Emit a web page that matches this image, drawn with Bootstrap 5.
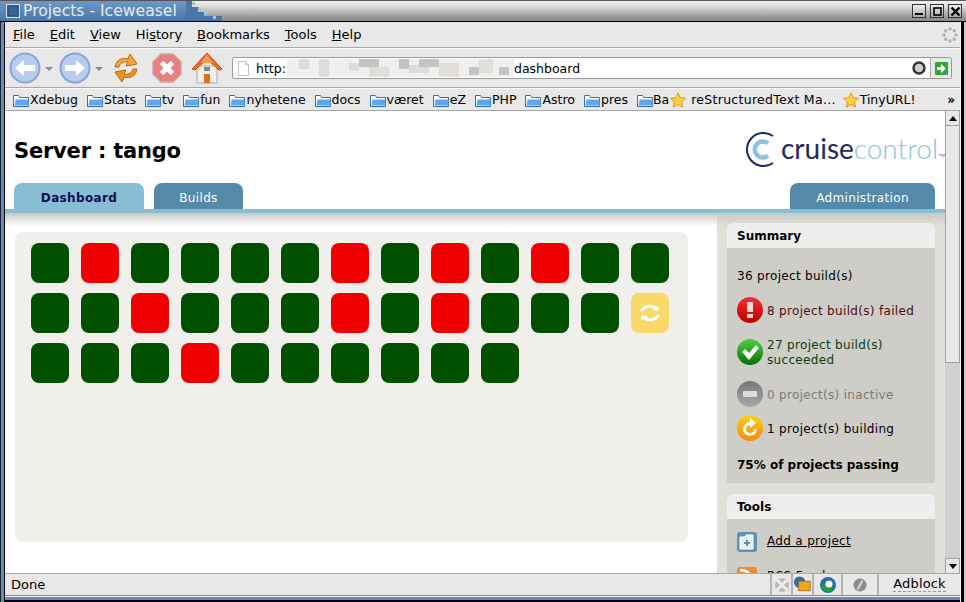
<!DOCTYPE html>
<html lang="en">
<head>
<meta charset="UTF-8">
<title>Projects - Iceweasel</title>
<link rel="stylesheet" href="https://cdn.jsdelivr.net/npm/bootstrap@5.3.0/dist/css/bootstrap.min.css">
<style>
html, body { height: 100%; }
body { width: 966px; height: 602px; overflow: hidden; background: #000; font-family: "DejaVu Sans", sans-serif; font-size: 13px; color: #000; }
.win { width: 966px; height: 602px; background: #000; }

/* window title */
.titlebar { height: 22px; flex: none; background: linear-gradient(#f2f2f2, #d8d8d8 30%, #8e8e8e 90%); border-top: 1px solid #555; border-bottom: 1px solid #000; }
.title-tab { width: 186px; background: linear-gradient(#6d97c6, #4a77a8); color: #e4ecf5; font-size: 15.6px; line-height: 20px; padding-left: 6px; gap: 3px; white-space: nowrap; }
.title-steps { width: 36px; }
.win-btn { width: 14px; height: 14px; border: 1px solid #333; background: linear-gradient(#eee, #aaa); margin-right: 4px; }

.frame-left { flex: none; width: 5px; border-left: 1px solid #222; border-right: 1px solid #000; background: #5f8fc4; }
.frame-right { flex: none; width: 6px; border-left: 1px solid #f4f4f4; border-right: 2px solid #ccc; background: #000; }
.frame-bottom { height: 6px; flex: none; background: #5f8fc4; border-top: 1px solid #f0f0f0; border-bottom: 2px solid #000; }

/* firefox chrome */
.menubar { height: 26px; flex: none; background: #e8e8e8; border-bottom: 1px solid #a8a8a8; padding-left: 8px; gap: 15px; }
.menubar span { line-height: 25px; }
.throbber { margin-left: auto; margin-right: 2px; }
.navtools { height: 40px; flex: none; background: #e8e8e8; border-top: 1px solid #fafafa; border-bottom: 1px solid #a8a8a8; padding-left: 4px; }
.drop-arrow { width: 0; height: 0; border-left: 4px solid transparent; border-right: 4px solid transparent; border-top: 4px solid #8a8a8a; margin: 2px 6px 0 4px; }
.nav-gap { margin-left: 10px; }
.urlbar { width: 720px; height: 22px; background: #fff; border: 1px solid #9a9a9a; border-radius: 2px; margin-left: 9px; line-height: 20px; font-size: 12.5px; }
.urlbar span { margin-top: 2px; }
.url-text { margin-left: 6px; width: 31px; }
.url-go { width: 21px; height: 100%; background: #e8e8e8; border-left: 1px solid #b0b0b0; }
.bookmarks { height: 23px; flex: none; background: #e8e8e8; border-top: 1px solid #fafafa; border-bottom: 1px solid #a8a8a8; padding: 1px 0 0 8px; white-space: nowrap; overflow: hidden; font-size: 12.5px; }
.bm { gap: 1px; margin-right: 9px; }
.bm-cut { margin-right: 1px; }
.bm-long { letter-spacing: .28px; margin-right: 7px; }
.bm-more { margin-left: auto; margin-right: 5px; font-size: 12px; font-weight: 700; }

/* page */
.content-row { height: 462px; flex: none; overflow: hidden; }
.page { width: 940px; background: #fff; overflow: hidden; }
.page-head { height: 72px; padding: 0 0 0 9px; }
.server-name { font-size: 21px; font-weight: 700; margin: 9px 0 0; letter-spacing: -.2px; line-height: 1; }
.logo { gap: 5px; margin-top: 2px; }
.logo svg { margin-top: 3px; }
.logo-text { font-family: Lato, sans-serif; font-size: 28px; line-height: 1; color: #1c2a66; font-weight: 400; }
.logo-text em { font-style: normal; color: #8cc2da; font-weight: 300; }
.logo-tm { font-size: 4px; color: #777; align-self: flex-end; margin: 0 0 8px -4px; }
.tabbar { height: 26px; padding: 0 10px 0 9px; gap: 10px; font-size: 12px; }
.tab-link { display: block; height: 26px; line-height: 31px; text-align: center; color: #fff; background: #5589a8; border-radius: 8px 8px 0 0; padding: 0; letter-spacing: .35px; }
.tab-link:hover { color: #fff; }
.tab-link.on { width: 130px; background: #88bed4; color: #0c0c55; font-weight: 700; }
.tab-builds { width: 89px; }
.tab-admin { width: 145px; }
.tab-rule { height: 4px; background: #88bed4; }
.page-main { height: 361px; }
.left-col { width: 712px; padding: 19px 0 0 10px; background: linear-gradient(#c8c8c4, #fafafa) 0 0 / 100% 12px no-repeat, #fff; }
.board { width: 673px; height: 310px; background: #f0efec; border-radius: 8px; padding: 11px 0 0 16px; display: grid; grid-template-columns: repeat(13, 38px); grid-auto-rows: 40px; column-gap: 12px; row-gap: 10px; }
.tile { border-radius: 8px; }
.tile-ok { background: #005000; }
.tile-bad { background: #f00000; }
.tile-run { background: #fad96c; }

.side-col { width: 228px; background: linear-gradient(#c8c8c4, #e0e0d8) 0 0 / 100% 12px no-repeat, #e0e0d8; padding: 10px 10px 0; }
.panel-box { background: #cfcdc8; border: 0; border-radius: 6px 6px 0 0; margin-bottom: 11px; }
.panel-box .card-header { background: #eeeeee; border: 0; border-radius: 6px 6px 0 0; height: 25px; line-height: 27px; padding: 0 10px; font-size: 12px; font-weight: 700; }
.panel-box .card-body { padding: 0 10px; font-size: 12px; letter-spacing: .32px; line-height: 15px; }
.stat-line { gap: 4px; height: 26px; }
.stat-line svg { flex: none; }
.stat-line span { margin-top: 2px; }
.stat-total { padding: 21px 0 13px; }
.stat-gap { margin-bottom: 16px; }
.stat-gap-s { margin-bottom: 8px; }
.stat-fail { color: #4a0e0e; }
.stat-pass { color: #0b3d0b; }
.stat-idle { color: #7a7a7a; }
.stat-pct { font-weight: 700; padding: 17px 0 10px; letter-spacing: 0; }
.tool-link { color: #000; gap: 10px; height: 35px; }
.panel-box .tool-top { padding-top: 5px; }
.tool-link a { color: #000; }

/* scrollbar */
.scroller { width: 15px; background: #d0d0d0; }
.scroll-btn { height: 15px; flex: none; background: #e8e8e8; border: 1px solid #a0a0a0; border-width: 0 1px 1px; }
.thumb { height: 237px; background: #e8e8e8; border: 1px solid #a0a0a0; border-width: 0 1px 1px; }
.scroll-down { margin-top: auto; border-width: 1px 1px 0; }
.arrow-up { width: 0; height: 0; border-left: 4px solid transparent; border-right: 4px solid transparent; border-bottom: 5px solid #000; }
.arrow-down { width: 0; height: 0; border-left: 4px solid transparent; border-right: 4px solid transparent; border-top: 5px solid #000; }

/* status bar */
.statusbar { height: 23px; flex: none; background: #e8e8e8; border-top: 1px solid #a8a8a8; border-bottom: 1px solid #8a8a8a; font-size: 13px; padding-left: 6px; }
.status-cell { height: 100%; border-left: 2px solid #b4b4b4; flex: none; }
.status-a { width: 21px; }
.status-b { width: 21px; }
.status-c { width: 29px; }
.status-d { width: 36px; }
.status-block { width: 83px; text-align: center; }
.status-block span { border-bottom: 1px dashed #999; line-height: 14px; letter-spacing: .15px; }
</style>
</head>
<body>
<div class="win d-flex flex-column">

  <div class="titlebar d-flex">
    <div class="title-tab d-flex align-items-center">
      <svg width="14" height="14" viewBox="0 0 14 14"><rect x=".5" y=".5" width="13" height="13" fill="#4a77a8" stroke="#cfe0f0"/><rect x="2" y="2" width="10" height="10" fill="#3a6598" stroke="#23466f"/></svg>
      <span>Projects - Iceweasel</span>
    </div>
    <svg class="title-steps" height="20" viewBox="0 0 36 20"><path d="M0 0h6v6h6v5h6v4h18v5H0z" fill="#4a77a8"/><path d="M6 1h3v3H6zM12 6h3v3h-3zM18 11h3v3h-3zM27 15h3v3h-3z" fill="#a8c2dc"/></svg>
    <div class="ms-auto d-flex align-items-center me-1">
      <div class="win-btn d-flex align-items-end justify-content-center"><svg width="9" height="6" viewBox="0 0 9 6"><rect y="2" width="8" height="2" fill="#000"/></svg></div>
      <div class="win-btn d-flex align-items-center justify-content-center"><svg width="9" height="9" viewBox="0 0 9 9"><rect x="1" y="1" width="7" height="7" fill="none" stroke="#000" stroke-width="1.6"/></svg></div>
      <div class="win-btn d-flex align-items-center justify-content-center me-0"><svg width="11" height="11" viewBox="0 0 11 11"><path d="M1.5 1.5l8 8M9.5 1.5l-8 8" stroke="#000" stroke-width="2.4"/></svg></div>
    </div>
  </div>

  <div class="d-flex flex-grow-1">
    <div class="frame-left"></div>
    <div class="flex-grow-1 d-flex flex-column">

      <div class="menubar d-flex">
        <span><u>F</u>ile</span><span><u>E</u>dit</span><span><u>V</u>iew</span><span>Hi<u>s</u>tory</span><span><u>B</u>ookmarks</span><span><u>T</u>ools</span><span><u>H</u>elp</span>
        <svg class="throbber align-self-center" width="16" height="16" viewBox="0 0 16 16"><g fill="#b4b4b4"><circle cx="8" cy="2" r="1.8"/><circle cx="12.3" cy="3.7" r="1.8"/><circle cx="14" cy="8" r="1.8"/><circle cx="12.3" cy="12.3" r="1.8"/><circle cx="8" cy="14" r="1.8"/><circle cx="3.7" cy="12.3" r="1.8"/><circle cx="2" cy="8" r="1.8"/><circle cx="3.7" cy="3.7" r="1.8"/></g></svg>
      </div>

      <div class="navtools d-flex align-items-center">
        <svg width="32" height="32" viewBox="0 0 32 32"><circle cx="16" cy="16" r="14.5" fill="#b8cdee" stroke="#8aa6d8" stroke-width="2"/><path d="M6 16l9-8v5h11v6H15v5z" fill="#fff"/></svg>
        <div class="drop-arrow"></div>
        <svg width="32" height="32" viewBox="0 0 32 32"><circle cx="16" cy="16" r="14.5" fill="#b8cdee" stroke="#8aa6d8" stroke-width="2"/><path d="M26 16l-9-8v5H6v6h11v5z" fill="#fff"/></svg>
        <div class="drop-arrow me-2"></div>
        <svg width="30" height="32" viewBox="0 0 30 32"><path d="M4 15C5 8 11 5 17 7l2-5 7 10-11 2 2-4c-5-1-8 1-9 5z" fill="#f7a535" stroke="#b8660f"/><path d="M26 17c-1 7-7 10-13 8l-2 5-7-10 11-2-2 4c5 1 8-1 9-5z" fill="#f29217" stroke="#b8660f"/></svg>
        <svg class="nav-gap" width="32" height="32" viewBox="0 0 32 32"><path d="M10 2h12l8 8v12l-8 8H10l-8-8V10z" fill="#e88080" stroke="#d8a0a0" stroke-width="1.5"/><path d="M10.500 10.500l11 11M21.500 10.500l-11 11" stroke="#fff" stroke-width="5"/></svg>
        <svg class="ms-2" width="32" height="34" viewBox="0 0 32 34"><path d="M6 15h20v17H6z" fill="#f3f0e8" stroke="#aaa"/><path d="M1 18L16 2l15 16-3 1L16 8 4 19z" fill="#ee6a1c" stroke="#c04c0c"/><path d="M16 3l-6 9h12z" fill="#f59a52"/><path d="M13 23h6v9h-6z" fill="#d9721c"/><rect x="13" y="16" width="6" height="4" fill="#888"/></svg>
        <div class="urlbar d-flex align-items-center">
          <svg class="ms-1" width="13" height="15" viewBox="0 0 13 15"><path d="M1.500.5h7l3 3v11h-10z" fill="#fdfdfd" stroke="#b8c4d4"/><path d="M8.500.5v3h3" fill="#dde6f0" stroke="#b8c4d4"/></svg>
          <span class="url-text">http:</span>
          <svg width="227" height="18" viewBox="0 0 227 18"><rect width="227" height="18" fill="#efefef"/><g fill="#dcdcdc"><rect x="12" width="10" height="10"/><rect x="32" width="10" height="18"/><rect x="62" y="4" width="10" height="8"/><rect x="122" y="6" width="20" height="8"/></g><g fill="#c4c4c4"><rect x="72" width="20" height="8"/><rect x="112" width="10" height="10"/><rect x="132" width="20" height="8"/><rect x="182" y="8" width="10" height="8"/><rect x="212" y="8" width="10" height="8"/></g><g fill="#e2deda"><rect x="82" y="8" width="20" height="10"/><rect x="152" y="4" width="20" height="14"/><rect x="192" width="14" height="14"/></g></svg>
          <span>dashboard</span>
          <svg class="ms-auto me-1" width="14" height="14" viewBox="0 0 14 14"><circle cx="7" cy="7" r="5.500" fill="#cfcfcf" stroke="#333" stroke-width="2.400"/></svg>
          <div class="url-go d-flex align-items-center justify-content-center"><svg width="13" height="13" viewBox="0 0 13 13"><rect width="13" height="13" rx="1" fill="#3aa040"/><path d="M2 5h4V2l5 4.500-5 4.500V8H2z" fill="#fff"/></svg></div>
        </div>
      </div>

      <div class="bookmarks d-flex align-items-center">
        <svg width="0" height="0" class="position-absolute"><defs><symbol id="folder" viewBox="0 0 16 13"><path d="M.5 12.500v-11h5l1 2h9v9z" fill="#fff" stroke="#2d6fc0"/><path d="M1.500 11.500l1-6h13v6z" fill="#5ea6ee"/></symbol><symbol id="star" viewBox="0 0 16 16"><path d="M8 .8l2.200 4.900 5.300.6-4 3.600 1.100 5.300L8 12.500l-4.600 2.700 1.100-5.300-4-3.600 5.300-.6z" fill="#ffd23c" stroke="#e8901c"/></symbol></defs></svg>
        <span class="bm d-flex align-items-center"><svg width="16" height="13"><use href="#folder"/></svg>Xdebug</span>
        <span class="bm d-flex align-items-center"><svg width="16" height="13"><use href="#folder"/></svg>Stats</span>
        <span class="bm d-flex align-items-center"><svg width="16" height="13"><use href="#folder"/></svg>tv</span>
        <span class="bm d-flex align-items-center"><svg width="16" height="13"><use href="#folder"/></svg>fun</span>
        <span class="bm d-flex align-items-center"><svg width="16" height="13"><use href="#folder"/></svg>nyhetene</span>
        <span class="bm d-flex align-items-center"><svg width="16" height="13"><use href="#folder"/></svg>docs</span>
        <span class="bm d-flex align-items-center"><svg width="16" height="13"><use href="#folder"/></svg>været</span>
        <span class="bm d-flex align-items-center"><svg width="16" height="13"><use href="#folder"/></svg>eZ</span>
        <span class="bm d-flex align-items-center"><svg width="16" height="13"><use href="#folder"/></svg>PHP</span>
        <span class="bm d-flex align-items-center"><svg width="16" height="13"><use href="#folder"/></svg>Astro</span>
        <span class="bm d-flex align-items-center"><svg width="16" height="13"><use href="#folder"/></svg>pres</span>
        <span class="bm-cut d-flex align-items-center"><svg width="16" height="13"><use href="#folder"/></svg>Ba</span>
        <span class="bm bm-long d-flex align-items-center"><svg class="me-1" width="16" height="16"><use href="#star"/></svg>reStructuredText Ma...</span>
        <span class="bm d-flex align-items-center"><svg width="16" height="16"><use href="#star"/></svg>TinyURL!</span>
        <span class="bm-more">»</span>
      </div>

      <div class="content-row d-flex">
        <div class="page">
          <div class="page-head d-flex justify-content-between align-items-center">
            <h1 class="server-name">Server : tango</h1>
            <div class="logo d-flex align-items-center">
              <svg width="31" height="35" viewBox="0 0 31 35"><path d="M28 4A16.500 16.500 0 1 0 28 31" fill="none" stroke="#1c2a66" stroke-width="2"/><path d="M23 11.500A8 8 0 1 0 23 23.500" fill="none" stroke="#8cc2da" stroke-width="4.500"/></svg>
              <div class="logo-text">cruise<em>control</em></div>
              <span class="logo-tm">TM</span>
            </div>
          </div>
          <ul class="nav tabbar">
            <li class="nav-item"><a class="tab-link on text-decoration-none" href="#">Dashboard</a></li>
            <li class="nav-item"><a class="tab-link tab-builds text-decoration-none" href="#">Builds</a></li>
            <li class="nav-item ms-auto"><a class="tab-link tab-admin text-decoration-none" href="#">Administration</a></li>
          </ul>
          <div class="tab-rule"></div>
          <div class="page-main d-flex">
            <div class="left-col">
              <div class="board">
                <div class="tile tile-ok"></div><div class="tile tile-bad"></div><div class="tile tile-ok"></div><div class="tile tile-ok"></div><div class="tile tile-ok"></div><div class="tile tile-ok"></div><div class="tile tile-bad"></div><div class="tile tile-ok"></div><div class="tile tile-bad"></div><div class="tile tile-ok"></div><div class="tile tile-bad"></div><div class="tile tile-ok"></div><div class="tile tile-ok"></div>
                <div class="tile tile-ok"></div><div class="tile tile-ok"></div><div class="tile tile-bad"></div><div class="tile tile-ok"></div><div class="tile tile-ok"></div><div class="tile tile-ok"></div><div class="tile tile-bad"></div><div class="tile tile-ok"></div><div class="tile tile-bad"></div><div class="tile tile-ok"></div><div class="tile tile-ok"></div><div class="tile tile-ok"></div>
                <div class="tile tile-run d-flex align-items-center justify-content-center">
                  <svg width="24" height="22" viewBox="0 0 24 22"><path d="M2 9C5 2 14 1 19 5l2-1-1 5-6-1 2-1c-3-2-8-2-11 2z" fill="#fff"/><path d="M22 13c-3 7-12 8-17 4l-2 1 1-5 6 1-2 1c3 2 8 2 11-2z" fill="#fff"/></svg>
                </div>
                <div class="tile tile-ok"></div><div class="tile tile-ok"></div><div class="tile tile-ok"></div><div class="tile tile-bad"></div><div class="tile tile-ok"></div><div class="tile tile-ok"></div><div class="tile tile-ok"></div><div class="tile tile-ok"></div><div class="tile tile-ok"></div><div class="tile tile-ok"></div>
              </div>
            </div>
            <div class="side-col">
              <div class="card panel-box">
                <div class="card-header">Summary</div>
                <div class="card-body">
                  <svg width="0" height="0" class="position-absolute"><defs>
                    <linearGradient id="gRed" x1="0" y1="0" x2="0" y2="1"><stop offset="0" stop-color="#f03030"/><stop offset="1" stop-color="#c00000"/></linearGradient>
                    <linearGradient id="gGreen" x1="0" y1="0" x2="0" y2="1"><stop offset="0" stop-color="#50d040"/><stop offset="1" stop-color="#067006"/></linearGradient>
                    <linearGradient id="gGray" x1="0" y1="0" x2="0" y2="1"><stop offset="0" stop-color="#777"/><stop offset="1" stop-color="#a8a8a8"/></linearGradient>
                    <linearGradient id="gOrange" x1="0" y1="0" x2="0" y2="1"><stop offset="0" stop-color="#fcd010"/><stop offset="1" stop-color="#f58a10"/></linearGradient>
                  </defs></svg>
                  <div class="stat-total">36 project build(s)</div>
                  <div class="stat-line stat-gap stat-fail d-flex align-items-center"><svg width="26" height="26" viewBox="0 0 26 26"><circle cx="13" cy="13" r="13" fill="url(#gRed)"/><path d="M10 5h6v10h-6zM10 17h6v4h-6z" fill="#f4d8d8"/></svg><span>8 project build(s) failed</span></div>
                  <div class="stat-line stat-gap stat-pass d-flex align-items-center"><svg width="26" height="26" viewBox="0 0 26 26"><circle cx="13" cy="13" r="13" fill="url(#gGreen)"/><path d="M5 13l3-3 4 4 7-8 3 3-10 12z" fill="#fff"/></svg><span>27 project build(s) succeeded</span></div>
                  <div class="stat-line stat-gap-s stat-idle d-flex align-items-center"><svg width="26" height="26" viewBox="0 0 26 26"><circle cx="13" cy="13" r="13" fill="url(#gGray)"/><rect x="6" y="10" width="14" height="6" rx="1" fill="#ddd"/></svg><span>0 project(s) inactive</span></div>
                  <div class="stat-line d-flex align-items-center"><svg width="26" height="26" viewBox="0 0 26 26"><circle cx="13" cy="13" r="13" fill="url(#gOrange)"/><path d="M13 7a7 7 0 1 0 7 7h-3a4 4 0 1 1-4-4v3l6-5-6-5z" fill="#fff"/></svg><span>1 project(s) building</span></div>
                  <div class="stat-pct">75% of projects passing</div>
                </div>
              </div>
              <div class="card panel-box">
                <div class="card-header">Tools</div>
                <div class="card-body tool-top">
                  <div class="tool-link d-flex align-items-center"><svg width="20" height="20" viewBox="0 0 20 20"><rect width="20" height="20" rx="3" fill="#5d93b5"/><path d="M3 5h5l1-2h7v14H3z" fill="#e8f0f4" stroke="#fff"/><path d="M9 8h2v2h2v2h-2v2H9v-2H7v-2h2z" fill="#5d93b5"/></svg><a href="#">Add a project</a></div>
                  <div class="tool-link d-flex align-items-center"><svg width="20" height="20" viewBox="0 0 20 20"><rect width="20" height="20" rx="3" fill="#f08a30"/><circle cx="5" cy="15" r="2" fill="#fff"/><path d="M3 8a9 9 0 0 1 9 9M3 3a14 14 0 0 1 14 14" fill="none" stroke="#fff" stroke-width="2.400"/></svg><a href="#">RSS Feed</a></div>
                </div>
              </div>
            </div>
          </div>
        </div>
        <div class="scroller d-flex flex-column">
          <div class="scroll-btn d-flex align-items-center justify-content-center"><div class="arrow-up"></div></div>
          <div class="thumb"></div>
          <div class="scroll-btn scroll-down d-flex align-items-center justify-content-center"><div class="arrow-down"></div></div>
        </div>
      </div>

      <div class="statusbar d-flex align-items-center">
        <span class="me-auto">Done</span>
        <div class="status-cell status-a d-flex align-items-center justify-content-center"><svg width="16" height="16" viewBox="0 0 16 16"><circle cx="8" cy="8" r="7" fill="#bbb"/><path d="M3 3l10 10M13 3L3 13" stroke="#eee" stroke-width="2.500"/></svg></div>
        <div class="status-cell status-b d-flex align-items-center justify-content-center"><svg width="20" height="20" viewBox="0 0 20 20"><circle cx="7" cy="7" r="6" fill="#2a6cb0"/><rect x="6" y="6" width="12" height="10" fill="#f0a818" stroke="#a87010"/></svg></div>
        <div class="status-cell status-c d-flex align-items-center justify-content-center"><svg width="18" height="18" viewBox="0 0 18 18"><circle cx="9" cy="9" r="8" fill="#2a6cb0"/><path d="M2 9a7 7 0 0 0 13 3l-4-1 3-3H5z" fill="#20a030"/><circle cx="10" cy="8" r="3.500" fill="#fff"/></svg></div>
        <div class="status-cell status-d d-flex align-items-center justify-content-center"><svg width="14" height="14" viewBox="0 0 14 14"><circle cx="7" cy="7" r="6.500" fill="#8a8a8a"/><path d="M9.500 2.500l-5 9" stroke="#d8d8d8" stroke-width="2"/></svg></div>
        <div class="status-cell status-block"><span>Adblock</span></div>
      </div>
      <div class="frame-bottom"></div>
    </div>
    <div class="frame-right"></div>
  </div>
</div>
</body>
</html>
